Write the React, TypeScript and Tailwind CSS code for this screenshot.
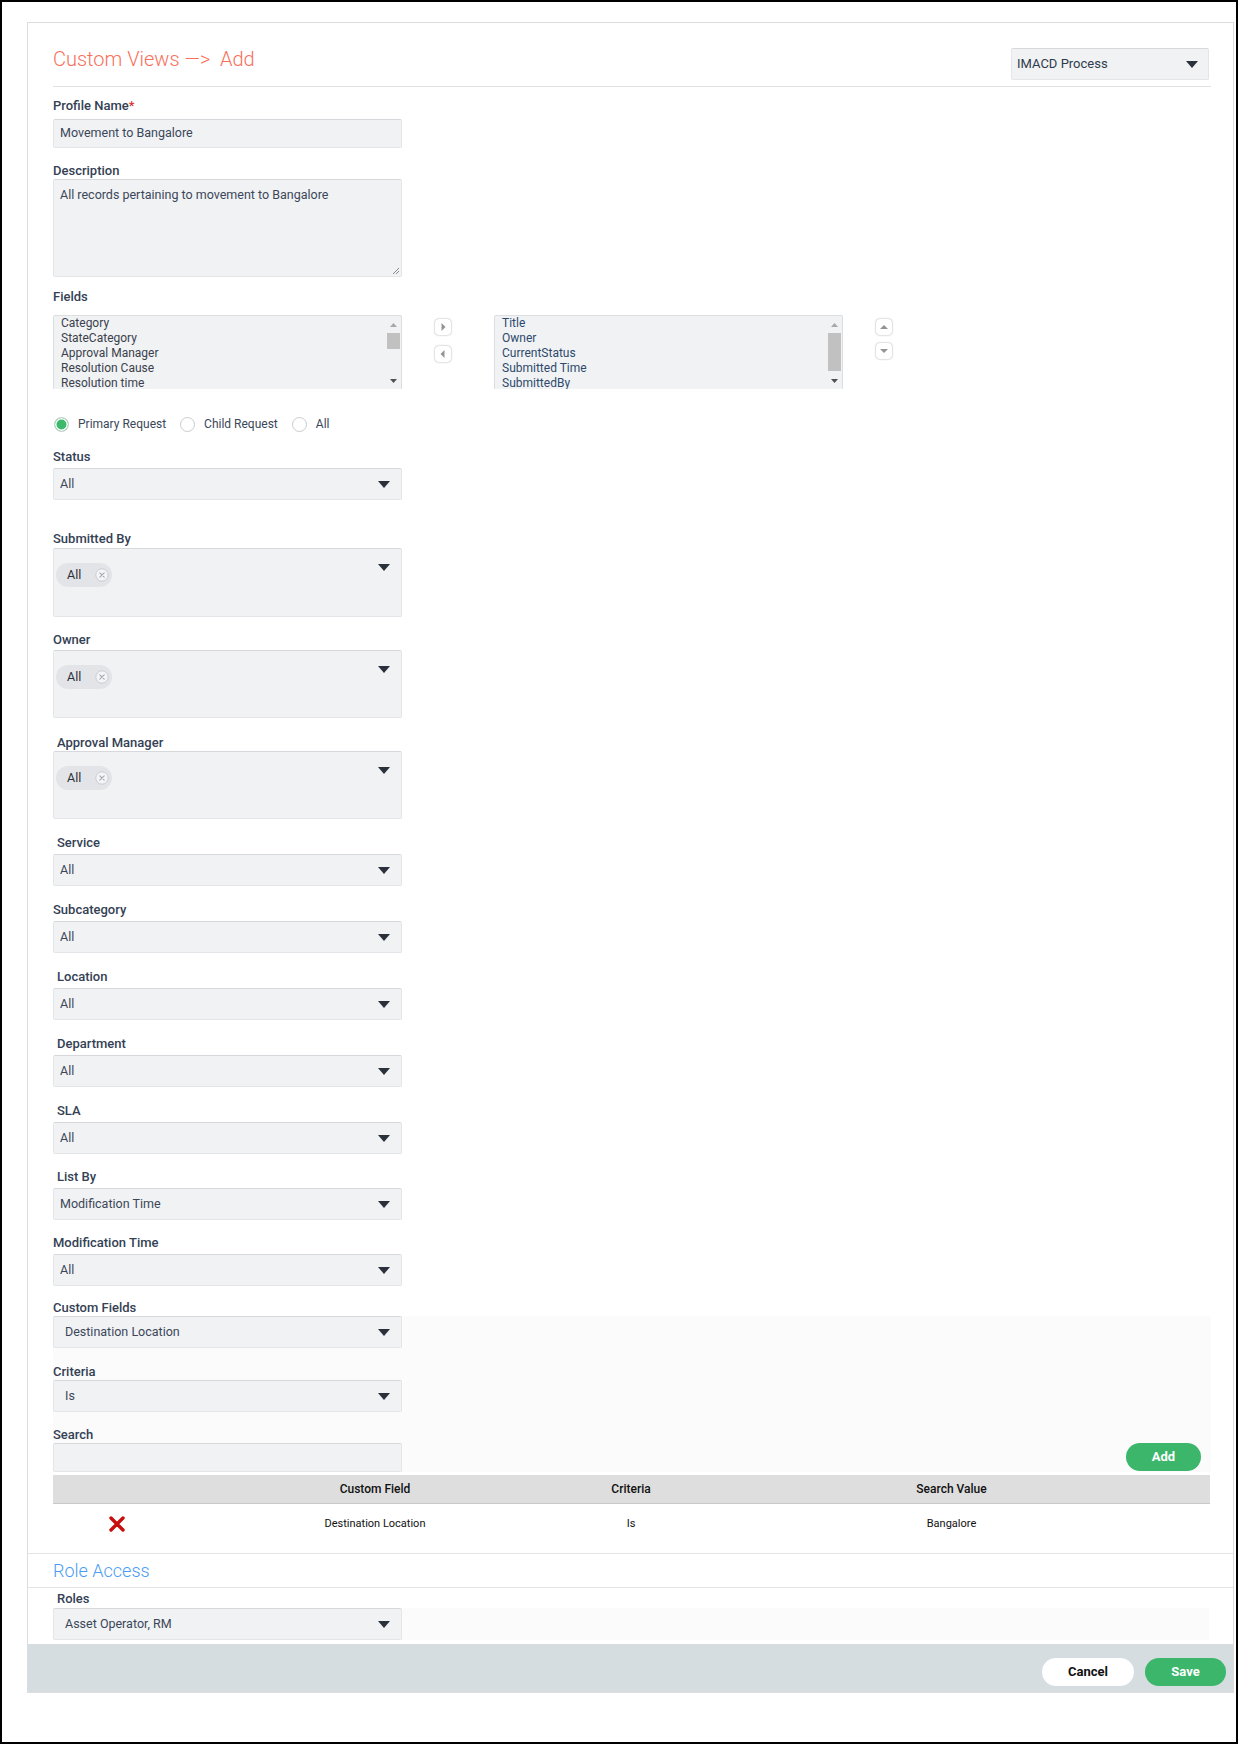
import React from "react";

const labelCls = "h-[16px] text-[13px] font-medium leading-[16px] text-[#344154]";

function Caret() {
  return (
    <svg width="12" height="7" viewBox="0 0 12 7" className="shrink-0">
      <path d="M0 0h12L6 7z" fill="#2a313a" />
    </svg>
  );
}

function Label({ children, className = "" }: { children: React.ReactNode; className?: string }) {
  return <div className={`${labelCls} ${className}`}>{children}</div>;
}

function Select({ value, className = "", pad = "pl-[6px]" }: { value: string; className?: string; pad?: string }) {
  return (
    <div
      className={`flex h-[32px] w-[349px] items-center justify-between rounded-[2px] border border-[#e3e5e8] border-t-[#d6d8dc] bg-[#f1f2f4] pr-[11px] text-[12.5px] text-[#3b4759] ${pad} ${className}`}
    >
      <span>{value}</span>
      <Caret />
    </div>
  );
}

function ChipBox({ className = "" }: { className?: string }) {
  return (
    <div
      className={`flex h-[68px] w-[349px] items-start justify-between rounded-[2px] border border-[#e3e5e8] border-t-[#d6d8dc] bg-[#f1f2f4] pl-[2px] pr-[11px] pt-[14px] ${className}`}
    >
      <div className="flex h-[24px] w-[56px] items-center justify-between rounded-full bg-[#e2e4e7] pl-[11px] pr-[3px] text-[12.5px] text-[#2a313a]">
        <span>All</span>
        <svg width="14" height="14" viewBox="0 0 14 14">
          <circle cx="7" cy="7" r="6.2" fill="#f4f5f6" stroke="#c9ccd0" strokeWidth="1" />
          <path d="M4.8 4.8l4.4 4.4M9.2 4.8l-4.4 4.4" stroke="#a4a8ad" strokeWidth="1.1" strokeLinecap="round" />
        </svg>
      </div>
      <div className="pt-[1px]">
        <Caret />
      </div>
    </div>
  );
}

function ListBox({ items, color, thumb }: { items: string[]; color: string; thumb: string }) {
  return (
    <div className="flex h-[74px] w-[349px] overflow-hidden rounded-t-[2px] border border-b-0 border-[#dcdee1] bg-[#f1f2f4]">
      <div className={`flex-1 pl-[7px] text-[12px] leading-[15px] ${color}`}>
        {items.map((i) => (
          <div key={i}>{i}</div>
        ))}
      </div>
      <div className="mr-[1px] flex w-[13px] flex-col items-center">
        <div className="flex h-[17px] items-center justify-center">
          <svg width="7" height="4" viewBox="0 0 7 4">
            <path d="M0 4h7L3.5 0z" fill="#a8a8a8" />
          </svg>
        </div>
        <div className={`w-[13px] bg-[#c1c1c1] ${thumb}`} />
        <div className="flex-1" />
        <div className="flex h-[13px] items-start justify-center pt-[3px]">
          <svg width="7" height="4" viewBox="0 0 7 4">
            <path d="M0 0h7L3.5 4z" fill="#505050" />
          </svg>
        </div>
      </div>
    </div>
  );
}

function MoveBtn({ dir }: { dir: "left" | "right" | "up" | "down" }) {
  const d = {
    right: "M2.5 0v8l4-4z",
    left: "M5.5 0v8l-4-4z",
    up: "M0 6h8L4 2z",
    down: "M0 2h8L4 6z",
  }[dir];
  return (
    <div className="flex h-[16px] w-[16px] items-center justify-center rounded-[4px] bg-white shadow-[0_0_2px_rgba(0,0,0,0.4)]">
      <svg width="8" height="8" viewBox="0 0 8 8">
        <path d={d} fill="#949494" />
      </svg>
    </div>
  );
}

function Radio({ checked, label }: { checked?: boolean; label: string }) {
  return (
    <div className="flex items-center">
      {checked ? (
        <span className="h-[15px] w-[15px] rounded-full border border-[#cfd3d6] bg-[#3cb96b] shadow-[inset_0_0_0_1.5px_#fff]" />
      ) : (
        <span className="h-[15px] w-[15px] rounded-full border border-[#c9cccf] bg-white" />
      )}
      <span className="ml-[9px] text-[12px] text-[#3b4759]">{label}</span>
    </div>
  );
}

function RedX() {
  return (
    <svg width="18" height="18" viewBox="0 0 18 18">
      <path d="M3 3l12 12M15 3L3 15" stroke="#c80d0d" strokeWidth="3.4" strokeLinecap="round" />
    </svg>
  );
}

const simpleSelects = [
  { label: "Service", mt: "mt-[16px] pl-[4px]", value: "All" },
  { label: "Subcategory", mt: "mt-[16px]", value: "All" },
  { label: "Location", mt: "mt-[16px] pl-[4px]", value: "All" },
  { label: "Department", mt: "mt-[16px] pl-[4px]", value: "All" },
  { label: "SLA", mt: "mt-[16px] pl-[4px]", value: "All" },
  { label: "List By", mt: "mt-[15px] pl-[4px]", value: "Modification Time" },
  { label: "Modification Time", mt: "mt-[15px]", value: "All" },
];

export default function App() {
  return (
    <div className="h-[1744px] w-[1238px] border-2 border-black bg-white font-[Roboto,sans-serif]">
      <div className="ml-[25px] mt-[20px] w-[1207px] border border-[#dddddd] bg-white">
        <div className="pl-[25px] pr-[22px]">
          {/* header */}
          <div className="flex items-start justify-between border-b border-[#e2e2e2] pb-[6px] pt-[25px]">
            <h1 className="-mt-[1px] text-[20px] font-light leading-[24px] text-[#f7705b]">
              Custom Views —&gt;&nbsp; Add
            </h1>
            <div className="mr-[2px] flex h-[32px] w-[198px] items-center justify-between rounded-[2px] border border-[#e3e5e8] border-t-[#d6d8dc] bg-[#f1f2f4] pl-[5px] pr-[10px] text-[13px] text-[#2f3b4c]">
              <span>IMACD Process</span>
              <Caret />
            </div>
          </div>

          {/* profile */}
          <Label className="mt-[11px]">
            Profile Name<span className="text-[#e0302b]">*</span>
          </Label>
          <div className="mt-[5px] flex h-[29px] w-[349px] items-center rounded-[2px] border border-[#e3e5e8] border-t-[#d6d8dc] bg-[#f1f2f4] pl-[6px] text-[12.5px] text-[#3b4759]">
            Movement to Bangalore
          </div>

          <Label className="mt-[15px]">Description</Label>
          <div className="relative h-[98px] w-[349px] rounded-[2px] border border-[#e3e5e8] border-t-[#d6d8dc] bg-[#f1f2f4] pl-[6px] pt-[7px] text-[12.5px] leading-[16px] text-[#3b4759]">
            All records pertaining to movement to Bangalore
            <svg width="8" height="8" viewBox="0 0 8 8" className="absolute bottom-[1px] right-[1px]">
              <path d="M7 1L1 7M7 4L4 7" stroke="#8a8a8a" strokeWidth="1" />
            </svg>
          </div>

          {/* fields */}
          <Label className="mt-[12px]">Fields</Label>
          <div className="mt-[10px] flex items-start">
            <ListBox
              items={["Category", "StateCategory", "Approval Manager", "Resolution Cause", "Resolution time"]}
              color="text-[#3a414c]"
              thumb="h-[16px]"
            />
            <div className="ml-[33px] flex flex-col gap-[11px] pt-[4px]">
              <MoveBtn dir="right" />
              <MoveBtn dir="left" />
            </div>
            <div className="ml-[43px]">
              <ListBox
                items={["Title", "Owner", "CurrentStatus", "Submitted Time", "SubmittedBy"]}
                color="text-[#2d4a6c]"
                thumb="h-[38px]"
              />
            </div>
            <div className="ml-[33px] flex flex-col gap-[8px] pt-[4px]">
              <MoveBtn dir="up" />
              <MoveBtn dir="down" />
            </div>
          </div>

          {/* radios */}
          <div className="ml-[1px] mt-[27px] flex h-[16px] items-center gap-[14px]">
            <Radio checked label="Primary Request" />
            <Radio label="Child Request" />
            <Radio label="All" />
          </div>

          <Label className="mt-[17px]">Status</Label>
          <Select value="All" className="mt-[3px]" />

          <Label className="mt-[31px]">Submitted By</Label>
          <ChipBox className="mt-[1px] h-[69px]" />

          <Label className="mt-[15px]">Owner</Label>
          <ChipBox className="mt-[2px]" />

          <Label className="mt-[17px] pl-[4px]">Approval Manager</Label>
          <ChipBox />

          {simpleSelects.map((s) => (
            <div key={s.label}>
              <Label className={s.mt}>{s.label}</Label>
              <Select value={s.value} className="mt-[3px]" />
            </div>
          ))}

          {/* custom fields */}
          <Label className="mt-[14px]">Custom Fields</Label>
          <div className="bg-[#fbfbfb]">
            <Select value="Destination Location" pad="pl-[11px]" />
            <Label className="mt-[16px]">Criteria</Label>
            <Select value="Is" pad="pl-[11px]" />
            <Label className="mt-[15px]">Search</Label>
            <div className="flex items-start justify-between pr-[10px]">
              <div className="h-[29px] w-[349px] rounded-[2px] border border-[#e3e5e8] border-t-[#d6d8dc] bg-[#f1f2f4]" />
              <button className="h-[28px] w-[75px] rounded-full bg-[#3bb66a] text-[13px] font-bold text-white">
                Add
              </button>
            </div>
          </div>

          {/* table */}
          <div className="mt-[3px] w-[1157px]">
            <div className="flex h-[29px] items-center border-b border-[#c9c9c9] bg-[#dedede] text-[12px] font-medium text-[#111]">
              <div className="w-[128px]" />
              <div className="w-[388px] text-center">Custom Field</div>
              <div className="w-[124px] text-center">Criteria</div>
              <div className="w-[517px] text-center">Search Value</div>
            </div>
            <div className="flex h-[49px] items-start pt-[11px] text-[11px] leading-[18px] text-[#111]">
              <div className="flex w-[128px] justify-center">
                <RedX />
              </div>
              <div className="w-[388px] text-center">Destination Location</div>
              <div className="w-[124px] text-center">Is</div>
              <div className="w-[517px] text-center">Bangalore</div>
            </div>
          </div>
        </div>

        {/* role access */}
        <div className="flex h-[35px] items-center border-y border-[#e4e4e4] pl-[25px]">
          <span className="text-[18px] font-light leading-[20px] text-[#4a9cf1]">Role Access</span>
        </div>
        <div className="pl-[25px] pr-[24px]">
          <Label className="mt-[3px] pl-[4px]">Roles</Label>
          <div className="mt-[1px] bg-[#fbfbfb]">
            <Select value="Asset Operator, RM" pad="pl-[11px]" />
          </div>
        </div>

        {/* footer */}
        <div className="mt-[4px] flex h-[48px] items-end justify-end gap-[11px] bg-[#d5dde0] pb-[6px] pr-[7px]">
          <button className="h-[28px] w-[92px] rounded-full bg-white text-[13px] font-bold text-[#111]">
            Cancel
          </button>
          <button className="h-[28px] w-[81px] rounded-full bg-[#3bb66a] text-[13px] font-bold text-white">
            Save
          </button>
        </div>
      </div>
    </div>
  );
}
